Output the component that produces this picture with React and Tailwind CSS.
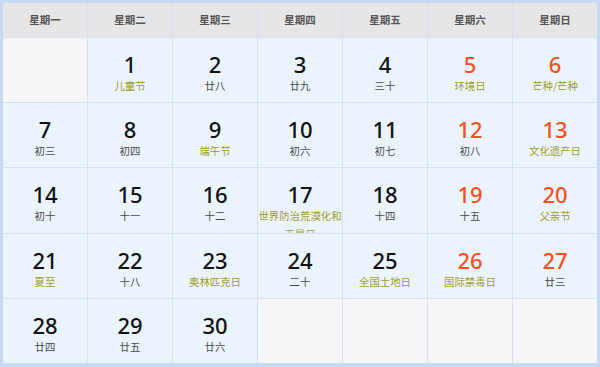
import React from "react";

const weekdays = ["星期一", "星期二", "星期三", "星期四", "星期五", "星期六", "星期日"];

const rows = [
  [null, [1, "儿童节", true], [2, "廿八"], [3, "廿九"], [4, "三十"], [5, "环境日", true], [6, "芒种/芒种", true]],
  [[7, "初三"], [8, "初四"], [9, "端午节", true], [10, "初六"], [11, "初七"], [12, "初八"], [13, "文化遗产日", true]],
  [[14, "初十"], [15, "十一"], [16, "十二"], [17, "世界防治荒漠化和干旱日", true], [18, "十四"], [19, "十五"], [20, "父亲节", true]],
  [[21, "夏至", true], [22, "十八"], [23, "奥林匹克日", true], [24, "二十"], [25, "全国土地日", true], [26, "国际禁毒日", true], [27, "廿三"]],
  [[28, "廿四"], [29, "廿五"], [30, "廿六"], null, null, null, null],
];

const cjk = { fontFamily: '"Noto Sans CJK SC", "Noto Sans", sans-serif' };

export default function App() {
  return (
    <div className="w-[600px] h-[367px] bg-[#c7daf3] pt-[3px] pl-[3px] pr-[3px] pb-[4px]">
      <div className="grid grid-cols-7 grid-rows-[34px_repeat(5,1fr)] gap-px h-full bg-[#d3e1f3]">
        {weekdays.map((w) => (
          <div
            key={w}
            className="bg-[#e6e6e6] flex items-center justify-center text-[10.5px] font-bold text-[#555555]"
            style={cjk}
          >
            {w}
          </div>
        ))}
        {rows.flatMap((row, ri) =>
          row.map((cell, ci) => {
            if (!cell) {
              return <div key={`${ri}-${ci}`} className="bg-[#f6f6f6]" />;
            }
            const [day, text, fest] = cell;
            const weekend = ci >= 5;
            return (
              <div
                key={`${ri}-${ci}`}
                className="bg-[#ebf3fc] flex flex-col items-center pt-[14px] overflow-hidden"
              >
                <div
                  className={`text-[22px] leading-[24px] font-medium ${weekend ? "text-[#f4511e]" : "text-[#111111]"}`}
                  style={{ fontFamily: '"Noto Sans", sans-serif' }}
                >
                  {day}
                </div>
                <div
                  className={`mt-[1px] w-full text-center text-[10.4px] leading-[18px] ${fest ? "text-[#9e9e1a]" : "text-[#4a4a4a]"}`}
                  style={cjk}
                >
                  {text}
                </div>
              </div>
            );
          })
        )}
      </div>
    </div>
  );
}
